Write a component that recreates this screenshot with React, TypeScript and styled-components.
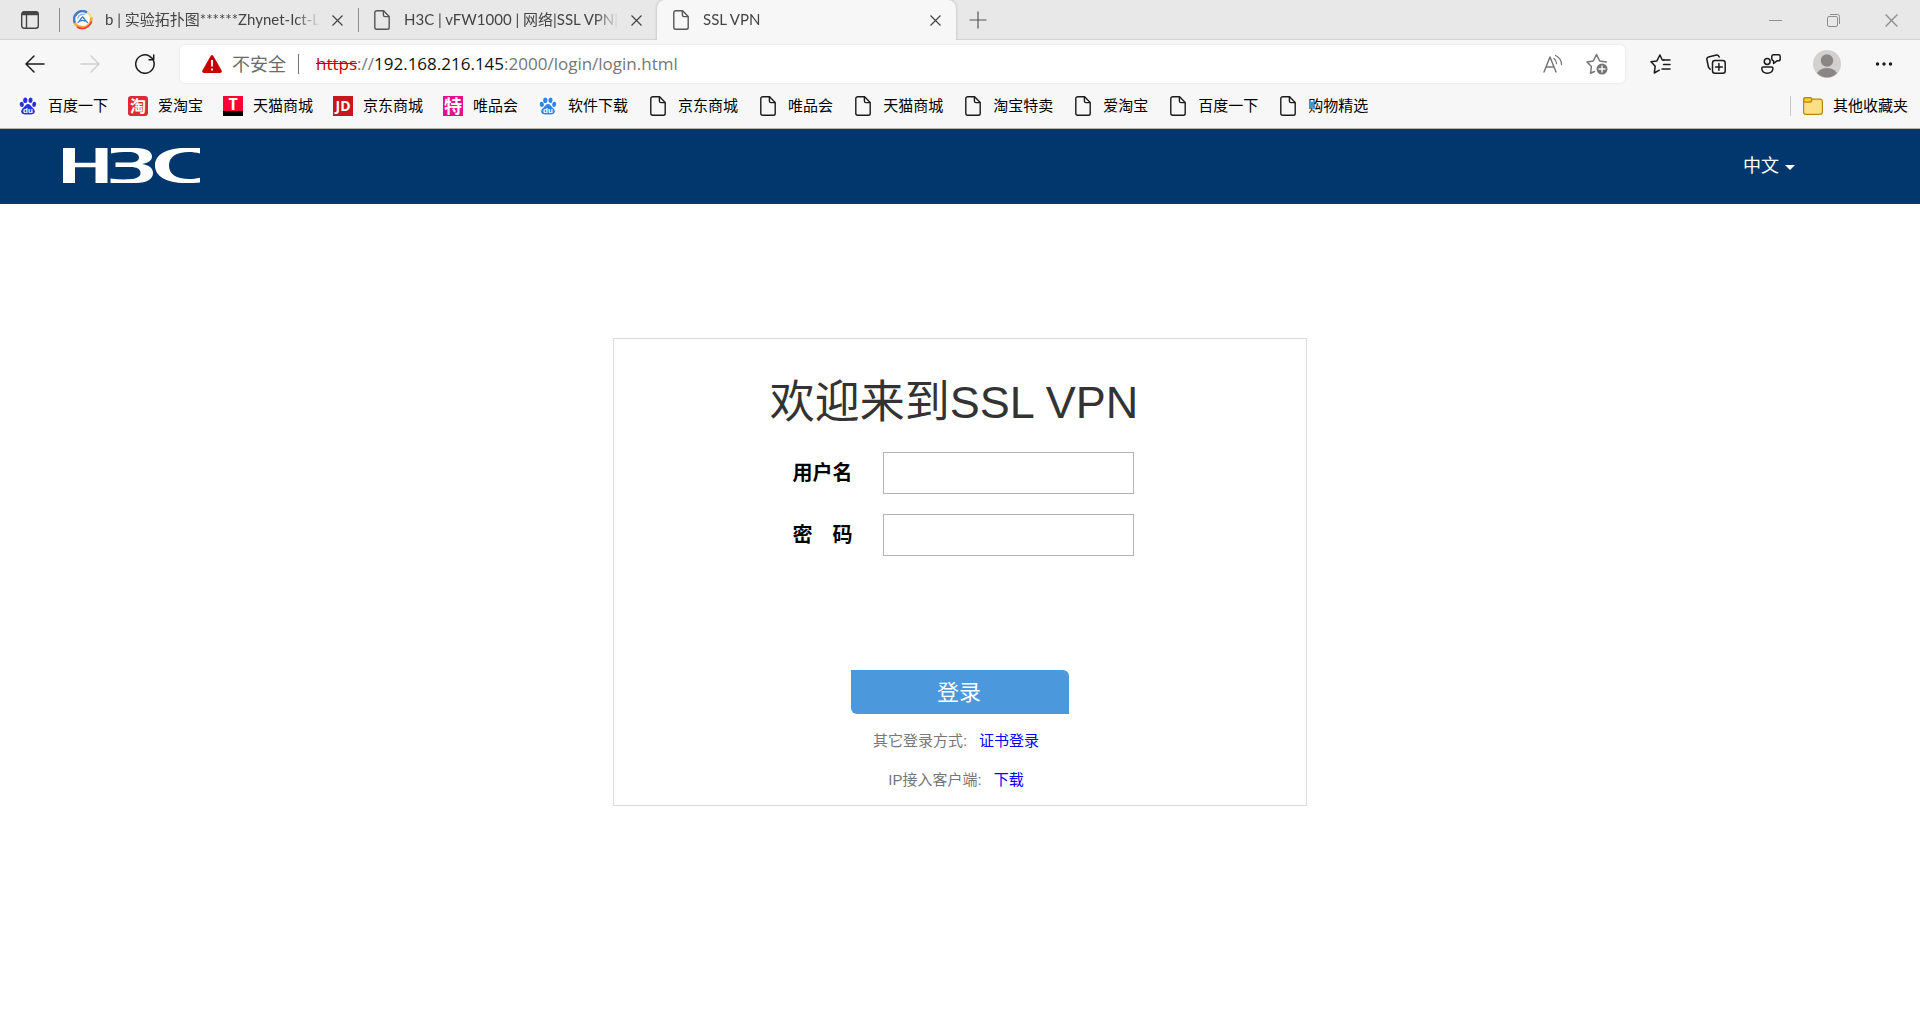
import React from "react";
import styled, { createGlobalStyle, css } from "styled-components";

const ui = `"Open Sans", "Noto Sans CJK SC", sans-serif`;
const tabFont = `Lato, "Noto Sans CJK SC", sans-serif`;
const page = `"Liberation Sans", "Noto Sans CJK SC", sans-serif`;

const GlobalStyle = createGlobalStyle`
  *, *::before, *::after { box-sizing: border-box; }
  body { margin: 0; background: #fff; font-family: ${page}; }
  button { border: 0; padding: 0; margin: 0; background: none; font: inherit; color: inherit; cursor: pointer; }
  a { text-decoration: none; }
  svg { display: block; flex: none; }
`;

const Chrome = styled.div`
  font-family: ${ui};
  background: #f7f7f7;
  border-bottom: 1px solid #b4b4b4;
`;

const TabStrip = styled.div`
  display: flex;
  height: 40px;
  background: #e8e8e8;
  box-shadow: inset 0 -1px #d4d4d4;
`;

const TabMenu = styled.button`
  width: 59px;
  display: flex;
  align-items: center;
  justify-content: center;
`;

const Tab = styled.div<{ $active?: boolean; $divided?: boolean }>`
  flex: 0 1 299px;
  min-width: 0;
  display: flex;
  align-items: center;
  gap: 12px;
  padding: 0 15px 0 14px;
  font-family: ${tabFont};
  font-size: 15px;
  line-height: 20px;
  color: #444;
  ${(p) =>
    p.$divided &&
    css`
      background: linear-gradient(#8c8c8c, #8c8c8c) 0 8px / 1px 24px no-repeat;
    `}
  ${(p) =>
    p.$active &&
    css`
      background: #f7f7f7;
      border-radius: 8px 8px 0 0;
      box-shadow: 0 0 3px rgba(0, 0, 0, 0.25);
      clip-path: inset(0 -4px 0 -4px);
    `}
`;

const TabTitle = styled.span`
  flex: 1;
  min-width: 0;
  padding-bottom: 2px;
  overflow: hidden;
  white-space: nowrap;
  mask-image: linear-gradient(to right, #000 calc(100% - 24px), transparent);
`;

const NewTab = styled.button`
  width: 44px;
  display: flex;
  align-items: center;
  justify-content: center;
`;

const WindowButtons = styled.div`
  margin-left: auto;
  display: flex;
`;

const WindowButton = styled.button`
  width: 58px;
  display: flex;
  align-items: center;
  justify-content: center;
  color: #8f8f8f;
`;

const Toolbar = styled.div`
  display: flex;
  align-items: center;
  gap: 8px;
  padding: 5px 9px 0 7px;
`;

const ToolGroup = styled.div`
  display: flex;
`;

const ToolButton = styled.button<{ $width: number; $dim?: boolean }>`
  width: ${(p) => p.$width}px;
  height: 38px;
  display: flex;
  align-items: center;
  justify-content: center;
  color: ${(p) => (p.$dim ? "#cfcfcf" : "#1b1b1b")};
`;

const AddressBar = styled.div`
  flex: 1;
  min-width: 0;
  height: 38px;
  display: flex;
  align-items: center;
  padding: 0 17px 0 22px;
  background: #fff;
  border-radius: 5px;
  box-shadow: 0 0 3px rgba(0, 0, 0, 0.1);
  font-size: 17px;
  line-height: 24px;
  color: #767676;
`;

const Security = styled.button`
  display: flex;
  align-items: center;
  gap: 10px;
  padding-right: 12px;
  font-size: 18px;
  color: #6b6b6b;
`;

const Separator = styled.span<{ $color: string }>`
  width: 1px;
  height: 20px;
  background: ${(p) => p.$color};
`;

const Url = styled.div`
  flex: 1;
  min-width: 0;
  padding-left: 17px;
  overflow: hidden;
  white-space: nowrap;
`;

const Scheme = styled.span`
  color: #c80000;
  text-decoration: line-through;
`;

const Host = styled.span`
  color: #111;
`;

const AddressActions = styled.div`
  display: flex;
  gap: 23px;
  color: #767676;
`;

const Bookmarks = styled.nav`
  display: flex;
  align-items: center;
  gap: 20px;
  height: 45px;
  padding: 0 12px 0 18px;
`;

const Bookmark = styled.a`
  display: flex;
  align-items: center;
  gap: 10px;
  font-size: 15px;
  line-height: 20px;
  color: #000;
  white-space: nowrap;
`;

const BookmarkLabel = styled.span`
  padding-bottom: 2px;
`;

const OtherBookmarks = styled.div`
  margin-left: auto;
  display: flex;
  align-items: center;
  gap: 12px;
`;

const IconBox = styled.span`
  flex: none;
  width: 20px;
  height: 20px;
  display: flex;
  align-items: center;
  justify-content: center;
`;

const Badge = styled(IconBox)<{ $bg: string; $size: number; $radius?: number }>`
  background: ${(p) => p.$bg};
  border-radius: ${(p) => p.$radius ?? 0}px;
  color: #fff;
  font-size: ${(p) => p.$size}px;
  font-weight: 700;
  line-height: 20px;
`;

const TopBadge = styled(Badge)`
  line-height: 16px;
  align-items: flex-start;
`;

const SiteHeader = styled.header`
  display: flex;
  align-items: center;
  justify-content: space-between;
  height: 75px;
  padding: 0 125px 2px 63px;
  background: #02376d;
`;

const Language = styled.button`
  display: flex;
  align-items: center;
  gap: 6px;
  font-size: 18px;
  line-height: 24px;
  color: #fff;
`;

const Caret = styled.span`
  margin-top: 4px;
  border: 5px solid transparent;
  border-top-color: #fff;
  border-bottom: 0;
`;

const Main = styled.main`
  padding: 134px 20px 60px;
`;

const Card = styled.form`
  max-width: 694px;
  margin: 0 auto;
  padding: 32px 0 10px;
  display: flex;
  flex-direction: column;
  align-items: center;
  border: 1px solid #ddd;
`;

const Title = styled.h1`
  margin: 0 0 17px;
  padding-right: 12px;
  font-size: 45px;
  line-height: 64px;
  font-weight: 400;
  color: #333;
`;

const Field = styled.div`
  display: flex;
  align-items: center;
  gap: 30px;
  margin-bottom: 20px;
  padding-left: 6px;
`;

const Label = styled.label`
  width: 60px;
  display: flex;
  justify-content: space-between;
  font-size: 20px;
  line-height: 28px;
  font-weight: 700;
  color: #000;
`;

const TextInput = styled.input`
  width: 251px;
  height: 42px;
  padding: 0 10px;
  border: 1px solid #b4b4b4;
  background: #fff;
  font: 18px/24px ${page};
`;

const LoginButton = styled.button`
  width: 218px;
  height: 44px;
  margin: 94px 0 12px;
  padding: 2px 2px 0 0;
  background: #4b98dc;
  border-radius: 0 6px 0 6px;
  font-size: 22px;
  line-height: 30px;
  color: #fff;
`;

const LinkRow = styled.p`
  margin: 0;
  padding-right: 8px;
  display: flex;
  gap: 12px;
  font-size: 15px;
  line-height: 30px;
  color: #777;

  & + & {
    margin-top: 9px;
  }
`;

const TextLink = styled.a`
  color: #00f;
`;

const PageIcon = ({ color = "#1b1b1b" }: { color?: string }) => (
  <IconBox>
    <svg width="16" height="20" viewBox="0 0 16 20" fill="none" stroke={color} strokeWidth="1.4" strokeLinejoin="round">
      <path d="M3 .8H9.6L15.2 6.4V17.4Q15.2 19.2 13.4 19.2H2.6Q.8 19.2.8 17.4V2.6Q.8.8 3 .8Z" />
      <path d="M9.4 1V5Q9.4 6.6 11 6.6H15" />
    </svg>
  </IconBox>
);

const PawIcon = ({ color }: { color: string }) => (
  <IconBox>
    <svg width="20" height="20" viewBox="0 0 20 20">
      <rect width="20" height="20" fill="#fff" />
      <g fill={color}>
        <ellipse cx="3.8" cy="8.4" rx="2.1" ry="2.7" transform="rotate(-12 3.8 8.4)" />
        <ellipse cx="7.3" cy="4.2" rx="2.1" ry="2.8" />
        <ellipse cx="12.5" cy="4.2" rx="2.1" ry="2.8" transform="rotate(8 12.5 4.2)" />
        <ellipse cx="16.2" cy="8.4" rx="2" ry="2.7" transform="rotate(12 16.2 8.4)" />
        <path d="M10 8C12 8 12.8 10 14.4 11.5C16.4 13.2 17.4 14.6 16.6 16.6C15.6 19.2 12.6 18.4 10 18.4S4.400 19.200 3.400 16.600C2.600 14.600 3.600 13.200 5.600 11.500C7.200 10 8 8 10 8Z" />
      </g>
      <text x="10" y="17" textAnchor="middle" fontFamily="Liberation Sans" fontWeight="700" fontSize="8" fill="#fff">du</text>
    </svg>
  </IconBox>
);

const CloseIcon = ({ size = 11 }: { size?: number }) => (
  <svg width={size} height={size} viewBox="0 0 11 11" stroke="currentColor" strokeWidth="1.2">
    <path d="M.5.5L10.5 10.5M10.5.5L.5 10.5" />
  </svg>
);

const LabIcon = () => (
  <IconBox>
    <svg width="20" height="20" viewBox="0 0 20 20" fill="none">
      <circle cx="9.6" cy="9.6" r="7.6" fill="#fff" />
      <path d="M2 13A8.200 8.200 0 0 1 14 2.600" stroke="#3d7fc1" strokeWidth="2.600" />
      <path d="M4.600 8.500A6 6 0 0 1 12 4.400" stroke="#7fb2de" strokeWidth="1.400" />
      <path d="M14.200 2.400A8.600 8.600 0 0 1 18.400 9" stroke="#f9dc8a" strokeWidth="2" />
      <path d="M18.200 7.500C18.800 13.500 14.600 17.200 10.200 17.200C6.600 17.200 3.400 16 1.600 13" stroke="#f6a53c" strokeWidth="2.600" />
      <path d="M18.600 11.500C16.400 18 9.400 20.400 4 17" stroke="#e0452f" strokeWidth="1.600" />
      <path d="M4.600 12.800C6.800 12 7.800 7.600 9.600 7C11.400 7.600 12.600 12 15 12.800M7 11.200Q9.600 9.600 12.200 11.200" stroke="#3d7fc1" strokeWidth="1.400" />
    </svg>
  </IconBox>
);

const H3CLogo = () => (
  <svg width="137" height="35" viewBox="0 0 137 35" role="img" aria-label="H3C" fill="none" stroke="#fff">
    <path d="M6 0V35M38.500 0V35" strokeWidth="12" />
    <path d="M6 17H39" strokeWidth="4.500" />
    <path
      fill="#fff"
      stroke="none"
      d="M48 0H73C84 0 89 4 89 8.500C89 12.500 85 15 79 16C86 17 90 20 90 25C90 31 84 35 73 35H47.500V30.500C54 31.400 60 31.500 66 31.300C74 31 77.500 28.500 77.500 25C77.500 21 74 19 67 19H52.500V14.500H66C73 14.500 76 12.500 76 9.500C76 6 72 4 65 4C59 4 53 4.300 48 5.500Z"
    />
    <path
      fill="#fff"
      stroke="none"
      d="M137 0V5.500C133 4.500 130 4 126 4C113 4 106 9 106 17.500C106 26 113 31 126 31C130 31 133 30.600 137 29.800V34.500C132 35 128 35 122 35C103 35 92 28 92 17.500C92 7 103 0 122 0Z"
    />
  </svg>
);

const bookmarks: { label: string; icon: React.ReactNode }[] = [
  { label: "百度一下", icon: <PawIcon color="#2a32e0" /> },
  { label: "爱淘宝", icon: <Badge $bg="#dd2a35" $size={16} $radius={3}>淘</Badge> },
  { label: "天猫商城", icon: <TopBadge $bg="linear-gradient(#ff0036 15px, #000 15px)" $size={16}>T</TopBadge> },
  { label: "京东商城", icon: <Badge $bg="#c9151e" $size={14}>JD</Badge> },
  { label: "唯品会", icon: <Badge $bg="#e3108f" $size={18}>特</Badge> },
  { label: "软件下载", icon: <PawIcon color="#2a86f8" /> },
  { label: "京东商城", icon: <PageIcon /> },
  { label: "唯品会", icon: <PageIcon /> },
  { label: "天猫商城", icon: <PageIcon /> },
  { label: "淘宝特卖", icon: <PageIcon /> },
  { label: "爱淘宝", icon: <PageIcon /> },
  { label: "百度一下", icon: <PageIcon /> },
  { label: "购物精选", icon: <PageIcon /> },
];

const tabs = [
  { title: "b | 实验拓扑图******Zhynet-Ict-La", icon: <LabIcon />, divided: true },
  { title: "H3C | vFW1000 | 网络|SSL VPN|访", icon: <PageIcon color="#555" />, divided: true },
  { title: "SSL VPN", icon: <PageIcon color="#555" />, active: true },
];

const line = { fill: "none", stroke: "currentColor", strokeWidth: 1.5, strokeLinecap: "round", strokeLinejoin: "round" } as const;

export default function App() {
  return (
    <>
      <GlobalStyle />
      <Chrome>
        <TabStrip>
          <TabMenu aria-label="Tab actions">
            <svg width="18" height="18" viewBox="0 0 18 18" fill="none" stroke="#444" strokeWidth="1.4">
              <rect x=".7" y=".7" width="16.600" height="16.600" rx="2.500" />
              <path d="M5.500 4V17" />
              <path d="M1 2.500H17" strokeWidth="3.500" />
            </svg>
          </TabMenu>
          {tabs.map((t) => (
            <Tab key={t.title} $active={t.active} $divided={t.divided}>
              {t.icon}
              <TabTitle>{t.title}</TabTitle>
              <button aria-label="Close tab"><CloseIcon /></button>
            </Tab>
          ))}
          <NewTab aria-label="New tab">
            <svg width="18" height="18" viewBox="0 0 18 18" stroke="#555" strokeWidth="1.2"><path d="M9 .5V17.5M.5 9H17.5" /></svg>
          </NewTab>
          <WindowButtons>
            <WindowButton aria-label="Minimize">
              <svg width="13" height="13" viewBox="0 0 13 13" stroke="currentColor"><path d="M0 6.500H13" /></svg>
            </WindowButton>
            <WindowButton aria-label="Restore">
              <svg width="13" height="13" viewBox="0 0 13 13" fill="none" stroke="currentColor">
                <rect x=".5" y="2.500" width="10" height="10" rx="1.500" />
                <path d="M3 .5H10.500Q12.500.5 12.500 2.500V10" />
              </svg>
            </WindowButton>
            <WindowButton aria-label="Close"><CloseIcon size={13} /></WindowButton>
          </WindowButtons>
        </TabStrip>

        <Toolbar>
          <ToolGroup>
            <ToolButton $width={55} aria-label="Back">
              <svg width="20" height="18" viewBox="0 0 20 18" {...line}><path d="M19 9H1M9 1L1 9L9 17" /></svg>
            </ToolButton>
            <ToolButton $width={55} $dim aria-label="Forward">
              <svg width="20" height="18" viewBox="0 0 20 18" {...line}><path d="M1 9H19M11 1L19 9L11 17" /></svg>
            </ToolButton>
            <ToolButton $width={55} aria-label="Refresh">
              <svg width="20" height="20" viewBox="0 0 20 20" {...line}><path d="M18.600 7A9.200 9.200 0 1 1 14.500 2.100L18.500 5.500M18.700 1V5.700H14" /></svg>
            </ToolButton>
          </ToolGroup>
          <AddressBar>
            <Security>
              <svg width="20" height="18" viewBox="0 0 20 18">
                <path d="M8.600.9Q10-.9 11.400.9L19.600 15.500Q20.400 18 18 18H2Q-.4 18 .4 15.500Z" fill="#c80000" />
                <path d="M10 5V11.500M10 13.500V15.500" stroke="#fff" strokeWidth="1.800" />
              </svg>
              不安全
            </Security>
            <Separator $color="#767676" />
            <Url role="textbox" aria-label="Address">
              <Scheme>https</Scheme>://<Host>192.168.216.145</Host>:2000/login/login.html
            </Url>
            <AddressActions>
              <button aria-label="Read aloud">
                <svg width="20" height="20" viewBox="0 0 20 20" {...line}>
                  <path d="M1 18L7 3L13 18M3 13H11" />
                  <path d="M11 4.500Q13.500 6.500 13.500 9.500M12.500 1.500Q18.500 4.500 18.500 10.500" strokeWidth="1.300" />
                </svg>
              </button>
              <button aria-label="Add to favourites">
                <svg width="22" height="22" viewBox="0 0 22 22" {...line}>
                  <path d="M8.500 18.500L4.500 20.300L5.400 13.500L1 9L7.300 8L10.500 1.500L13.700 8L20.300 9" />
                  <circle cx="16" cy="16" r="5.500" fill="currentColor" stroke="none" />
                  <path d="M16 13V19M13 16H19" stroke="#fff" strokeWidth="1.300" />
                </svg>
              </button>
            </AddressActions>
          </AddressBar>
          <ToolGroup>
            <ToolButton $width={55} aria-label="Favourites">
              <svg width="21" height="20" viewBox="0 0 21 20" {...line}>
                <path d="M13.500 6H20M13.500 10.500H20M12 15H20" />
                <path d="M9.300 16.200L4.300 19L5.200 12.200L1 7.800L6.900 6.900L9.900 1L12.300 6H14" />
              </svg>
            </ToolButton>
            <ToolButton $width={55} aria-label="Collections">
              <svg width="20" height="20" viewBox="0 0 20 20" {...line}>
                <rect x="6.500" y="6.500" width="12.700" height="12.700" rx="2.500" />
                <path d="M12.900 9.500V16.300M9.500 12.900H16.300M4.200 15.200L3 14Q2.500 13.500 2.200 12L.9 5.500Q.5 3.500 2.500 3L10.500 1Q12.500.6 13.200 3" />
              </svg>
            </ToolButton>
            <ToolButton $width={55} aria-label="Share feedback">
              <svg width="20" height="20" viewBox="0 0 20 20" {...line}>
                <circle cx="6.200" cy="7.500" r="2.900" />
                <path d="M2 13H10.500Q12 13 12 14.500Q11.500 19.200 6.300 19.200T.8 14.500Q.8 13 2 13Z" />
                <path d="M12.500.8H17.500Q19.200.8 19.200 2.500V5Q19.200 6.800 17.500 6.800H16L12.600 9.500V6.800Q10.800 6.600 10.800 5V2.500Q10.800.8 12.500.8Z" />
              </svg>
            </ToolButton>
            <ToolButton $width={58} aria-label="Profile">
              <svg width="28" height="28" viewBox="0 0 28 28">
                <clipPath id="avatar"><circle cx="14" cy="14" r="13.500" /></clipPath>
                <circle cx="14" cy="14" r="14" fill="#d3d1cf" />
                <g fill="#8b8683" clipPath="url(#avatar)">
                  <circle cx="14" cy="10.500" r="6.200" />
                  <ellipse cx="14" cy="25.500" rx="10.500" ry="7.500" />
                </g>
              </svg>
            </ToolButton>
            <ToolButton $width={55} aria-label="Settings and more">
              <svg width="18" height="4" viewBox="0 0 18 4" fill="currentColor">
                <circle cx="2.500" cy="2" r="1.700" /><circle cx="9" cy="2" r="1.700" /><circle cx="15.500" cy="2" r="1.700" />
              </svg>
            </ToolButton>
          </ToolGroup>
        </Toolbar>

        <Bookmarks aria-label="Favourites bar">
          {bookmarks.map((b, i) => (
            <Bookmark key={i} href="#">{b.icon}<BookmarkLabel>{b.label}</BookmarkLabel></Bookmark>
          ))}
          <OtherBookmarks>
            <Separator $color="#c8c8c8" />
            <Bookmark href="#">
              <IconBox>
                <svg width="20" height="18" viewBox="0 0 20 18" stroke="#b8860b" strokeWidth="1.200">
                  <path d="M.6 4V15Q.6 17.400 3 17.400H17Q19.400 17.400 19.400 15V4.500Q19.400 2.200 17 2.200H9L7.500.6H3Q.6.6.6 3Z" fill="#ffdf85" />
                  <path d="M.6 3Q.6.6 3 .6H7Q9 .8 9 2.500Q9 5.200 6.500 5.200H2.500Q.6 5 .6 3Z" fill="#fcc934" />
                </svg>
              </IconBox>
              <BookmarkLabel>其他收藏夹</BookmarkLabel>
            </Bookmark>
          </OtherBookmarks>
        </Bookmarks>
      </Chrome>

      <SiteHeader>
        <H3CLogo />
        <Language>中文<Caret /></Language>
      </SiteHeader>

      <Main>
        <Card onSubmit={(e) => e.preventDefault()}>
          <Title>欢迎来到SSL VPN</Title>
          <Field>
            <Label htmlFor="username">用户名</Label>
            <TextInput id="username" type="text" />
          </Field>
          <Field>
            <Label htmlFor="password"><span>密</span><span>码</span></Label>
            <TextInput id="password" type="password" />
          </Field>
          <LoginButton type="submit">登录</LoginButton>
          <LinkRow>其它登录方式: <TextLink href="#">证书登录</TextLink></LinkRow>
          <LinkRow>IP接入客户端: <TextLink href="#">下载</TextLink></LinkRow>
        </Card>
      </Main>
    </>
  );
}
